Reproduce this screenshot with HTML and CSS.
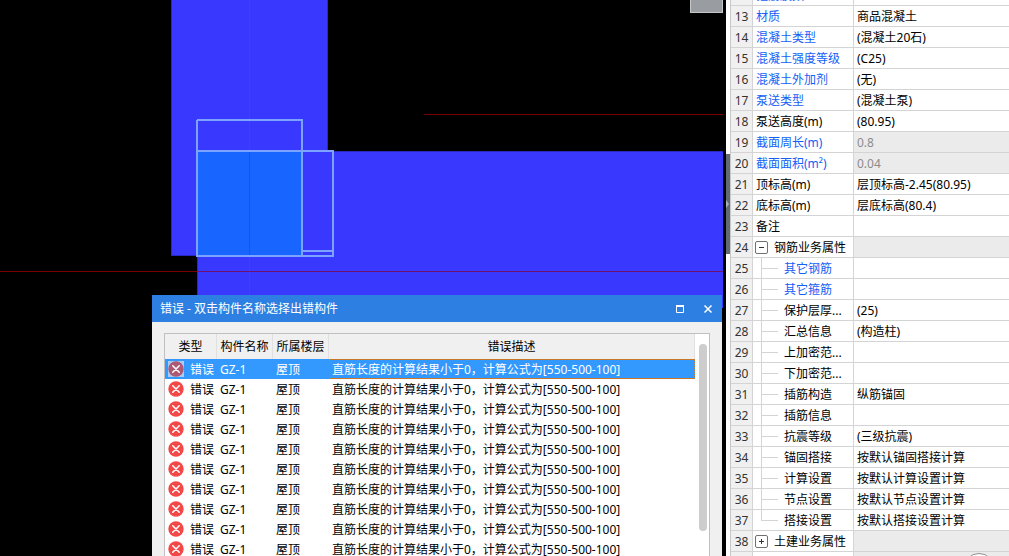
FILE: index.html
```
<!DOCTYPE html>
<html lang="zh-CN">
<head>
<meta charset="utf-8">
<title>构件属性</title>
<link rel="stylesheet" href="styles.css">
</head>
<body>
<svg class="defs" width="0" height="0" aria-hidden="true">
  <symbol id="err" viewBox="0 0 16 16">
    <circle cx="8" cy="8" r="7.7"/>
    <path d="M4.8 4.8l6.4 6.4M11.2 4.8l-6.4 6.4" fill="none" stroke="#fff" stroke-width="1.6" stroke-linecap="round"/>
  </symbol>
</svg>
<main class="app">
  <section class="canvas">
    <svg class="scene" role="img" aria-label="平面图">
      <rect x="171" y="0" width="157" height="256" fill="#3838ff"/>
      <rect x="197" y="151" width="526" height="157" fill="#3838ff"/>
      <path d="M171.500 0V255.500H197M327.500 0V151.500H723M197.500 256V308" fill="none" stroke="#2929c4"/>
      <rect x="198" y="152" width="103" height="103" fill="#1866ff"/>
      <path d="M249.500 0V308" stroke="#d01848"/>
      <path d="M0 271.500H197M424 114.500H723" stroke="#780000"/>
      <path d="M197 271.500H723" stroke="#701070"/>
      <path d="M197 120H302V255M197 120V256H333V151H197M302 251H333" fill="none" stroke="#7ba3ff" stroke-width="2"/>
    </svg>
    <div class="viewcube"></div>
    <section class="dialog" role="dialog" aria-labelledby="dlg-title">
      <header class="titlebar">
        <h1 id="dlg-title">错误 - 双击构件名称选择出错构件</h1>
        <button type="button" class="winbtn" aria-label="最大化"><svg width="8" height="8"><path d="M.5 0V7.500H7.500V0M0 1H8" fill="none" stroke="#fff"/><path d="M0 1H8" stroke="#fff" stroke-width="2"/></svg></button>
        <button type="button" class="winbtn" aria-label="关闭"><svg width="8" height="8"><path d="M.5.5l7 7M7.500.5l-7 7" stroke="#fff" stroke-width="1.500"/></svg></button>
      </header>
      <div class="list">
        <table class="errors">
          <colgroup><col class="c-type"><col class="c-name"><col class="c-name"><col></colgroup>
          <thead><tr><th>类型</th><th>构件名称</th><th>所属楼层</th><th>错误描述</th></tr></thead>
          <tbody>
            <tr class="selected"><td><svg class="err"><use href="#err"/></svg>错误</td><td>GZ-1</td><td>屋顶</td><td>直筋长度的计算结果小于0，计算公式为[550-500-100]</td></tr>
            <tr><td><svg class="err"><use href="#err"/></svg>错误</td><td>GZ-1</td><td>屋顶</td><td>直筋长度的计算结果小于0，计算公式为[550-500-100]</td></tr>
            <tr><td><svg class="err"><use href="#err"/></svg>错误</td><td>GZ-1</td><td>屋顶</td><td>直筋长度的计算结果小于0，计算公式为[550-500-100]</td></tr>
            <tr><td><svg class="err"><use href="#err"/></svg>错误</td><td>GZ-1</td><td>屋顶</td><td>直筋长度的计算结果小于0，计算公式为[550-500-100]</td></tr>
            <tr><td><svg class="err"><use href="#err"/></svg>错误</td><td>GZ-1</td><td>屋顶</td><td>直筋长度的计算结果小于0，计算公式为[550-500-100]</td></tr>
            <tr><td><svg class="err"><use href="#err"/></svg>错误</td><td>GZ-1</td><td>屋顶</td><td>直筋长度的计算结果小于0，计算公式为[550-500-100]</td></tr>
            <tr><td><svg class="err"><use href="#err"/></svg>错误</td><td>GZ-1</td><td>屋顶</td><td>直筋长度的计算结果小于0，计算公式为[550-500-100]</td></tr>
            <tr><td><svg class="err"><use href="#err"/></svg>错误</td><td>GZ-1</td><td>屋顶</td><td>直筋长度的计算结果小于0，计算公式为[550-500-100]</td></tr>
            <tr><td><svg class="err"><use href="#err"/></svg>错误</td><td>GZ-1</td><td>屋顶</td><td>直筋长度的计算结果小于0，计算公式为[550-500-100]</td></tr>
            <tr><td><svg class="err"><use href="#err"/></svg>错误</td><td>GZ-1</td><td>屋顶</td><td>直筋长度的计算结果小于0，计算公式为[550-500-100]</td></tr>
          </tbody>
        </table>
        <div class="scroll"><div class="thumb"></div></div>
      </div>
    </section>
  </section>
  <div class="splitter"><div class="grip"><svg width="4" height="8"><path d="M0 0L3 4L0 8Z" fill="#a9b0b5"/></svg></div></div>
  <aside class="panel">
    <table class="props">
      <colgroup><col class="c-num"><col class="c-prop"><col></colgroup>
      <tbody>
        <tr><th>12</th><td class="blue">箍筋肢数</td><td></td></tr>
        <tr><th>13</th><td class="blue">材质</td><td>商品混凝土</td></tr>
        <tr><th>14</th><td class="blue">混凝土类型</td><td>(混凝土20石)</td></tr>
        <tr><th>15</th><td class="blue">混凝土强度等级</td><td>(C25)</td></tr>
        <tr><th>16</th><td class="blue">混凝土外加剂</td><td>(无)</td></tr>
        <tr><th>17</th><td class="blue">泵送类型</td><td>(混凝土泵)</td></tr>
        <tr><th>18</th><td>泵送高度(m)</td><td>(80.95)</td></tr>
        <tr><th>19</th><td class="blue">截面周长(m)</td><td class="locked">0.8</td></tr>
        <tr><th>20</th><td class="blue">截面面积(m²)</td><td class="locked">0.04</td></tr>
        <tr><th>21</th><td>顶标高(m)</td><td>层顶标高-2.45(80.95)</td></tr>
        <tr><th>22</th><td>底标高(m)</td><td>层底标高(80.4)</td></tr>
        <tr><th>23</th><td>备注</td><td></td></tr>
        <tr><th>24</th><td class="group"><button type="button" class="toggle" aria-label="折叠"><svg width="7" height="7"><path d="M1 3.500H6" stroke="#333"/></svg></button>钢筋业务属性</td><td class="locked"></td></tr>
        <tr><th>25</th><td class="child blue">其它钢筋</td><td></td></tr>
        <tr><th>26</th><td class="child blue">其它箍筋</td><td></td></tr>
        <tr><th>27</th><td class="child">保护层厚...</td><td>(25)</td></tr>
        <tr><th>28</th><td class="child">汇总信息</td><td>(构造柱)</td></tr>
        <tr><th>29</th><td class="child">上加密范...</td><td></td></tr>
        <tr><th>30</th><td class="child">下加密范...</td><td></td></tr>
        <tr><th>31</th><td class="child">插筋构造</td><td>纵筋锚固</td></tr>
        <tr><th>32</th><td class="child">插筋信息</td><td></td></tr>
        <tr><th>33</th><td class="child">抗震等级</td><td>(三级抗震)</td></tr>
        <tr><th>34</th><td class="child">锚固搭接</td><td>按默认锚固搭接计算</td></tr>
        <tr><th>35</th><td class="child">计算设置</td><td>按默认计算设置计算</td></tr>
        <tr><th>36</th><td class="child">节点设置</td><td>按默认节点设置计算</td></tr>
        <tr><th>37</th><td class="child last">搭接设置</td><td>按默认搭接设置计算</td></tr>
        <tr><th>38</th><td class="group"><button type="button" class="toggle" aria-label="展开"><svg width="7" height="7"><path d="M1 3.500H6M3.500 1V6" stroke="#333"/></svg></button>土建业务属性</td><td class="locked"></td></tr>
        <tr><th></th><td class="group"><button type="button" class="toggle" aria-label="展开"><svg width="7" height="7"><path d="M1 3.500H6M3.500 1V6" stroke="#333"/></svg></button></td><td class="locked"></td></tr>
      </tbody>
    </table>
    <div class="floater"></div>
  </aside>
</main>
</body>
</html>
```
FILE: styles.css
```
* { box-sizing: border-box; }
body {
  margin: 0;
  font: 12px/18px "Noto Sans", "Noto Sans CJK SC", sans-serif;
  color: #000;
}
.defs { position: absolute; }
.app { display: flex; height: 100vh; overflow: hidden; background: #000; }
button { padding: 0; border: 0; background: none; }
table { border-collapse: separate; border-spacing: 0; table-layout: fixed; width: 100%; }
th, td { padding: 0; font-weight: normal; white-space: nowrap; overflow: hidden; }

/* Drawing area */
.canvas { position: relative; flex: 1; min-width: 0; }
.scene { display: block; width: 100%; height: 100%; }
.viewcube {
  position: absolute; top: 0; right: 3px; width: 33px; height: 13px;
  background: #999da1; border: 1px solid #c4c7c9; border-top: 0;
}

/* Error dialog */
.dialog {
  position: absolute; left: 152px; right: 4px; top: 295px; bottom: 0;
  display: flex; flex-direction: column; background: #f0f0f0;
}
.titlebar {
  display: flex; align-items: center; gap: 4px; height: 27px; flex: none;
  padding: 0 2px 0 8px; background: #2d80e2; color: #fff;
}
.titlebar h1 { flex: 1; margin: 0; font-size: 12px; font-weight: normal; }
.winbtn { display: flex; align-items: center; justify-content: center; width: 24px; height: 24px; }
.list {
  flex: 1; min-height: 0; display: flex; margin: 11px 12px 0;
  border: 1px solid #c0c0c0; border-bottom: 0; background: #fff; overflow: hidden;
}
.errors { flex: 1; align-self: flex-start; width: auto; }
.c-type { width: 52px; }
.c-name { width: 56px; }
.errors th { height: 25px; background: #f0f0f0; border-right: 1px solid #e0e0e0; }
.errors td { height: 20px; padding: 2px 0 0 3px; }
.errors svg { width: 16px; height: 16px; margin-right: 6px; vertical-align: -3px; fill: #f44848; }
.errors .selected { background: #3399ff; color: #fff; }
.errors .selected svg { background: #a9ccf0; fill: #ad5875; }
.errors .selected td:last-child { outline: 1px dotted #c87828; outline-offset: -1px; }
.scroll { width: 14px; flex: none; padding: 10px 2px 0 4px; }
.thumb { height: 187px; border-radius: 4px; background: #cdcdcd; }

/* Splitter */
.splitter { width: 4px; flex: none; padding-top: 154px; background: #fff; }
.grip { display: flex; align-items: center; height: 100px; background: #606a74; }

/* Property panel */
.panel {
  position: relative; width: 279px; flex: none; overflow: hidden;
  background: #fff; border-left: 1px solid #c8c8c8;
}
.props { margin-top: -15px; }
.c-num { width: 22px; }
.c-prop { width: 101px; }
.props th, .props td { height: 21px; padding-top: 2px; border-bottom: 1px solid #d4d4d4; }
.props th { background: #f0f0f0; color: #333; border-right: 1px solid #d4d4d4; }
.props td { padding-left: 3px; }
.props td:nth-child(2) { border-right: 1px solid #d4d4d4; }
.props .blue { color: #1460f5; }
.props .locked { background: #ebebeb; color: #8c8c8c; }
.props .group { padding-left: 2px; }
.toggle {
  display: inline-flex; align-items: center; justify-content: center;
  width: 13px; height: 13px; margin-right: 6px; vertical-align: 1px;
  border: 1px solid #707070; border-radius: 2px; background: #fff;
}
.toggle svg { display: block; }
.props .child {
  padding-left: 31px;
  background:
    linear-gradient(#d4d4d4, #d4d4d4) 8px 0 / 1px 100% no-repeat,
    linear-gradient(#d4d4d4, #d4d4d4) 8px 10px / 17px 1px no-repeat;
}
.props .last { background-size: 1px 10px, 17px 1px; }
.floater {
  position: absolute; right: 14px; bottom: -29px; width: 32px; height: 32px;
  border: 1px solid #909090; border-radius: 50%; background: #fff;
}
```
